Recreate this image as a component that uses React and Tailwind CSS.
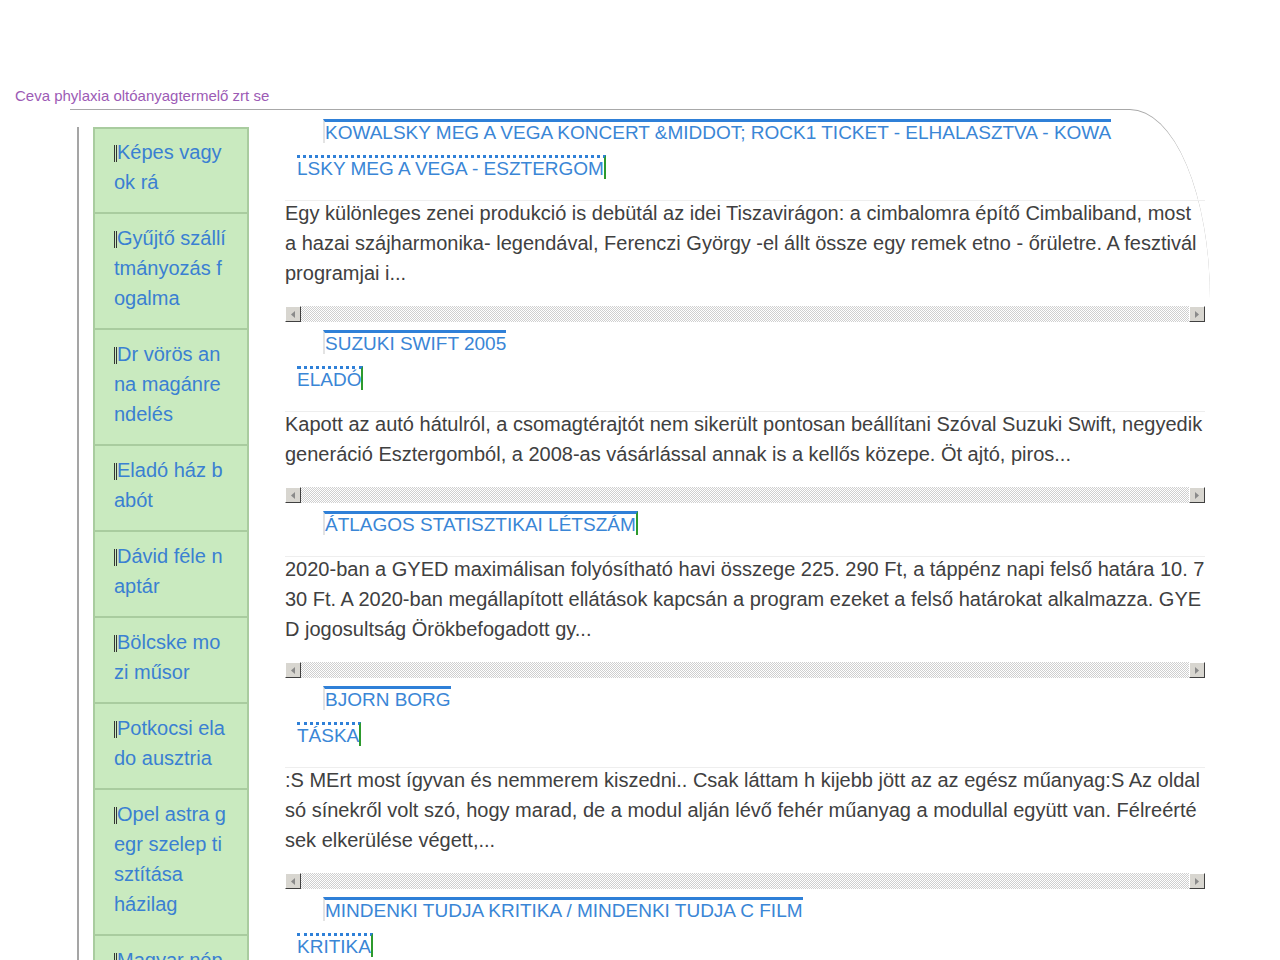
import React from "react";

const sideLinks = [
  "Képes vagyok rá",
  "Gyűjtő szállítmányozás fogalma",
  "Dr vörös anna magánrendelés",
  "Eladó ház babót",
  "Dávid féle naptár",
  "Bölcske mozi műsor",
  "Potkocsi elado ausztria",
  "Opel astra g egr szelep tisztítása\nházilag",
  "Magyar népmesék",
];

const posts = [
  {
    title: [
      "KOWALSKY MEG A VEGA KONCERT &MIDDOT; ROCK1 TICKET - ELHALASZTVA - KOWA",
      "LSKY MEG A VEGA - ESZTERGOM",
    ],
    text: "Egy különleges zenei produkció is debütál az idei Tiszavirágon: a cimbalomra építő Cimbaliband, most a hazai szájharmonika- legendával, Ferenczi György -el állt össze egy remek etno - őrületre. A fesztivál programjai i...",
  },
  {
    title: ["SUZUKI SWIFT 2005", "ELADÓ"],
    text: "Kapott az autó hátulról, a csomagtérajtót nem sikerült pontosan beállítani Szóval Suzuki Swift, negyedik generáció Esztergomból, a 2008-as vásárlással annak is a kellős közepe. Öt ajtó, piros...",
  },
  {
    title: ["ÁTLAGOS STATISZTIKAI LÉTSZÁM"],
    text: "2020-ban a GYED maximálisan folyósítható havi összege 225. 290 Ft, a táppénz napi felső határa 10. 730 Ft. A 2020-ban megállapított ellátások kapcsán a program ezeket a felső határokat alkalmazza. GYED jogosultság Örökbefogadott gy...",
  },
  {
    title: ["BJORN BORG", "TÁSKA"],
    text: ":S MErt most ígyvan és nemmerem kiszedni.. Csak láttam h kijebb jött az az egész műanyag:S Az oldalsó sínekről volt szó, hogy marad, de a modul alján lévő fehér műanyag a modullal együtt van. Félreértések elkerülése végett,...",
  },
  {
    title: ["MINDENKI TUDJA KRITIKA / MINDENKI TUDJA C FILM", "KRITIKA"],
    text: "A film a pszichológiai thriller műfajában mozog, és a rendező ezúttal is kiválóan építi fel a feszültséget. A szereplők játéka meggyőző, a történet pedig...",
  },
];

const Arrow = ({ dir }) => (
  <svg width="4" height="7" viewBox="0 0 4 7">
    {dir === "left" ? (
      <polygon points="4,0 0,3.5 4,7" fill="#8a8a8a" />
    ) : (
      <polygon points="0,0 4,3.5 0,7" fill="#8a8a8a" />
    )}
  </svg>
);

const ScrollButton = ({ dir }) => (
  <div className="w-4 h-4 shrink-0 flex items-center justify-center bg-[#d8d6d0] border border-t-white border-l-white border-r-[#404040] border-b-[#404040]">
    <Arrow dir={dir} />
  </div>
);

const FakeScrollbar = () => (
  <div className="mt-[18px] h-4 flex bg-[image:repeating-conic-gradient(#cfcfcf_0%_25%,#ffffff_0%_50%)] bg-[length:2px_2px]">
    <ScrollButton dir="left" />
    <div className="flex-1" />
    <ScrollButton dir="right" />
  </div>
);

const PostTitle = ({ lines }) => (
  <div className="pl-[12px] indent-[26px] text-[19px] leading-[36px] text-[#3a86d6]">
    {lines.map((line, i) => {
      const first = i === 0;
      const last = i === lines.length - 1;
      return (
        <React.Fragment key={i}>
          {!first && <br />}
          <a
            href="#"
            className={
              "border-t-[3px] border-t-[#2f80d8] " +
              (first
                ? "border-l-2 border-l-[#e3e3e3] "
                : "[border-top-style:dotted] ") +
              (last ? "border-r-2 border-r-[#2d9a2d]" : "")
            }
          >
            {line}
          </a>
        </React.Fragment>
      );
    })}
  </div>
);

export default function App() {
  return (
    <div className="min-h-screen bg-white font-['Liberation_Sans',Arial,sans-serif]">
      <div className="pt-[86px] pl-[15px] text-[15px] leading-[20px]">
        <a href="#" className="text-[#9c5bb5]">
          Ceva phylaxia oltóanyagtermelő zrt se
        </a>
      </div>

      <div className="mt-[3px] ml-[70px] w-[1140px] border-t border-t-[#a8a8a8] rounded-tr-[80px_190px] flex items-start">
        {/* sidebar */}
        <div className="ml-[7px] mt-[17px] border-l-2 border-l-[#a5a5a5] pl-[14px]">
          <ul className="w-[156px]">
            {sideLinks.map((t, i) => (
              <li
                key={i}
                className={
                  "bg-[#c9eabf] border-x-2 border-b-2 border-[#a9cc9f] pl-[19px] pr-[19px] pb-[15px] " +
                  (i === 0 ? "border-t-2 pt-[8px]" : "pt-[9px]")
                }
              >
                <a
                  href="#"
                  className="block w-[114px] break-all whitespace-pre-line text-[20px] leading-[30px] text-[#3a80d2]"
                >
                  <span className="inline-block h-[17px] w-[3px] border-l-[3px] border-double border-[#333] align-middle" />
                  {t}
                </a>
              </li>
            ))}
          </ul>
        </div>

        {/* posts */}
        <div className="ml-[36px] mt-[5px] w-[920px]">
          {posts.map((p, i) => (
            <div key={i} className={i === 0 ? "" : "mt-[4px]"}>
              <PostTitle lines={p.title} />
              <div className="mt-[13px] border-t border-t-[#eeeeee]" />
              <p className="-mt-[3px] break-all text-[20px] leading-[30px] text-[#404040]">
                {p.text}
              </p>
              <FakeScrollbar />
            </div>
          ))}
        </div>
      </div>
    </div>
  );
}
